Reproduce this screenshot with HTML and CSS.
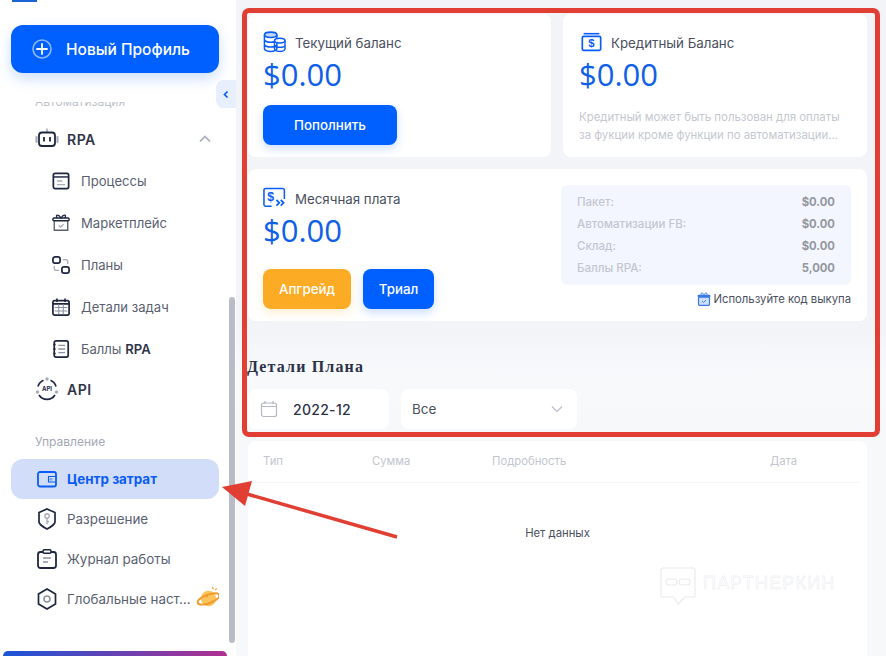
FILE: index.html
```html
<!DOCTYPE html>
<html lang="ru">
<head>
<meta charset="utf-8">
<title>Центр затрат</title>
<link rel="stylesheet" href="styles.css">
</head>
<body>
<div class="app">
  <aside class="sidebar">
    <div class="logo-stub"></div>
    <button class="new-profile">
      <svg class="plus" viewBox="0 0 20 20" width="20" height="20"><circle cx="10" cy="10" r="9" fill="none" stroke="#8db6ff" stroke-width="1.6"/><path d="M10 5v10M5 10h10" stroke="#fff" stroke-width="1.8" stroke-linecap="round"/></svg>
      <span>Новый Профиль</span>
    </button>
    <nav class="nav">
      <div class="group-label clipped">Автоматизация</div>
      <div class="row row-top">
        <svg class="ic24" viewBox="0 0 24 24"><path d="M12 1.500v4" stroke="#a9adb9" stroke-width="1.6"/><path d="M1.500 10v5M22.500 10v5" stroke="#a9adb9" stroke-width="2.2" stroke-linecap="round"/><rect x="4" y="5.500" width="16" height="13.500" rx="3" fill="none" stroke="#1e2640" stroke-width="1.8"/><path d="M9 10v4.500M15 10v4.500" stroke="#1e2640" stroke-width="1.8"/></svg>
        <span class="strong wide">RPA</span>
        <svg class="caret" viewBox="0 0 12 8" width="12" height="8"><path d="M1 6.500l5-5 5 5" fill="none" stroke="#a9adb9" stroke-width="1.7"/></svg>
      </div>
      <div class="sub">
        <svg class="ic18" viewBox="0 0 20 20"><rect x="1.500" y="1.500" width="17" height="17" rx="2" fill="none" stroke="#1e2640" stroke-width="1.9"/><path d="M2 5.500h16" stroke="#1e2640" stroke-width="1.6"/><path d="M5.500 10h6M5.500 14h9" stroke="#a9adb9" stroke-width="1.5"/></svg>
        <span>Процессы</span>
      </div>
      <div class="sub">
        <svg class="ic18" viewBox="0 0 20 20"><path d="M2.500 7v11h15V7" fill="none" stroke="#5a5f70" stroke-width="1.5"/><rect x="1" y="4.500" width="18" height="3" rx="1.200" fill="none" stroke="#1e2640" stroke-width="1.6"/><path d="M6 4.500C3 1 7-.5 10 4.500 13-.5 17 1 14 4.500" fill="none" stroke="#1e2640" stroke-width="1.5"/><path d="M7.500 12.500l2 2 3.500-3" fill="none" stroke="#a9adb9" stroke-width="1.4"/></svg>
        <span>Маркетплейс</span>
      </div>
      <div class="sub">
        <svg class="ic18" viewBox="0 0 20 20"><rect x="1" y="1" width="8" height="7" rx="2.400" fill="none" stroke="#1e2640" stroke-width="1.9"/><rect x="11" y="12" width="8" height="7" rx="2.400" fill="none" stroke="#1e2640" stroke-width="1.9"/><path d="M12 4h3a2.500 2.500 0 0 1 2.500 2.500V9M8 16H5a2.500 2.500 0 0 1-2.500-2.500V11" fill="none" stroke="#a9adb9" stroke-width="1.5"/></svg>
        <span>Планы</span>
      </div>
      <div class="sub">
        <svg class="ic18" viewBox="0 0 20 20"><rect x="1" y="3" width="18" height="16" rx="2" fill="none" stroke="#1e2640" stroke-width="1.9"/><path d="M5.500 .5v4M14.500 .5v4M1 6.500h18" stroke="#1e2640" stroke-width="1.8"/><path d="M3 10.500h14M3 14.500h14M7.500 7v11M12.500 7v11" stroke="#8d92a1" stroke-width="1.2"/></svg>
        <span>Детали задач</span>
      </div>
      <div class="sub">
        <svg class="ic18" viewBox="0 0 20 20"><rect x="2.500" y="1" width="15.500" height="18" rx="2" fill="none" stroke="#1e2640" stroke-width="1.9"/><path d="M1.500 5h2.500M1.500 10h2.500M1.500 15h2.500" stroke="#1e2640" stroke-width="1.500"/><path d="M7 6h7.500M7 10h7.500M7 14h7.500" stroke="#8d92a1" stroke-width="1.500"/></svg>
        <span>Баллы <b class="strong">RPA</b></span>
      </div>
      <div class="row row-api">
        <svg class="ic24" viewBox="0 0 24 24"><path d="M3 9.500A9.500 9.500 0 0 1 8.500 3.300M15.500 3.300A9.500 9.500 0 0 1 21 9.500M4 18a9.500 9.500 0 0 0 16 0" fill="none" stroke="#1e2640" stroke-width="1.700"/><circle cx="12" cy="2" r="1.700" fill="#a9adb9"/><circle cx="2.500" cy="15" r="1.700" fill="#a9adb9"/><circle cx="21.500" cy="15" r="1.700" fill="#a9adb9"/><text x="12" y="14" class="api-text">API</text></svg>
        <span class="strong wide">API</span>
      </div>
      <div class="group-label manage">Управление</div>
      <div class="row active">
        <svg class="ic20" viewBox="0 0 20 20"><rect x="1" y="3" width="18" height="14.500" rx="2" fill="none" stroke="#0a5cf5" stroke-width="1.800"/><path d="M19 7.500h-7.500v5.500H19" fill="none" stroke="#0a5cf5" stroke-width="1.100"/><rect x="12.500" y="9" width="3" height="2.500" fill="#7da4ef"/></svg>
        <span>Центр затрат</span>
      </div>
      <div class="row">
        <svg class="ic20" viewBox="0 0 20 22"><path d="M10 1l8 3.500v9.500c0 2-5 5.500-8 7-3-1.500-8-5-8-7V4.500z" fill="none" stroke="#1e2640" stroke-width="1.700"/><circle cx="10" cy="8" r="2.200" fill="none" stroke="#a9adb9" stroke-width="1.400"/><path d="M10 10.200v6M10 13.500h2" stroke="#a9adb9" stroke-width="1.400"/></svg>
        <span>Разрешение</span>
      </div>
      <div class="row">
        <svg class="ic20" viewBox="0 0 20 20"><rect x="1" y="3" width="18" height="16" rx="2.500" fill="none" stroke="#1e2640" stroke-width="1.800"/><rect x="6" y=".8" width="8" height="3.500" rx="1.200" fill="#fff" stroke="#1e2640" stroke-width="1.500"/><path d="M6 9h8M6 13h5" stroke="#8d92a1" stroke-width="1.500"/></svg>
        <span>Журнал работы</span>
      </div>
      <div class="row">
        <svg class="ic20" viewBox="0 0 20 22"><path d="M10 1l8.500 5v10L10 21l-8.500-5V6z" fill="none" stroke="#1e2640" stroke-width="1.700"/><circle cx="10" cy="11" r="3" fill="none" stroke="#8d92a1" stroke-width="1.600"/></svg>
        <span>Глобальные наст…</span>
        <svg class="planet" viewBox="0 0 26 24" width="25" height="24"><circle cx="13" cy="13.500" r="8" fill="#fcc45d"/><ellipse cx="13" cy="14" rx="12" ry="4.500" transform="rotate(-20 13 14)" fill="none" stroke="#f39a2c" stroke-width="2"/><circle cx="11" cy="11" r="1.500" fill="#f39a2c"/><path d="M17 1.500l1 2.500M21.500 3l-1.500 2" stroke="#f39a2c" stroke-width="1.200"/></svg>
      </div>
    </nav>
    <div class="promo"></div>
    <div class="collapse-tab"><svg viewBox="0 0 8 10" width="6" height="9"><path d="M6 1L2 5l4 4" fill="none" stroke="#0a5cf5" stroke-width="2.200"/></svg></div>
    <div class="scroll-thumb"></div>
  </aside>

  <main class="main">
    <div class="top-cards">
      <section class="card balance balance-main">
        <div class="card-title">
          <svg class="ic-title" viewBox="0 0 24 22"><ellipse cx="8" cy="3.500" rx="6.500" ry="2.800" fill="#0a5cf5" fill-opacity=".25" stroke="#0a5cf5" stroke-width="1.600"/><path d="M1.500 3.500v14.500c0 1.500 3 2.800 6.500 2.800s6.500-1.300 6.500-2.800V3.500M1.500 8.500c0 1.500 3 2.800 6.500 2.800s6.500-1.300 6.500-2.800M1.500 13.500c0 1.500 3 2.800 6.500 2.800s6.500-1.300 6.500-2.800" fill="none" stroke="#0a5cf5" stroke-width="1.600"/><ellipse cx="17.500" cy="9.500" rx="5.500" ry="2.500" fill="#fff" stroke="#0a5cf5" stroke-width="1.500"/><path d="M12 9.500V18c0 1.500 2.500 2.800 5.500 2.800S23 19.500 23 18V9.500M12 14c0 1.400 2.500 2.500 5.500 2.500S23 15.400 23 14" fill="none" stroke="#0a5cf5" stroke-width="1.500"/></svg>
          <span>Текущий баланс</span>
        </div>
        <div class="amount">$0.00</div>
        <button class="btn btn-blue btn-topup">Пополнить</button>
      </section>
      <section class="card balance balance-credit">
        <div class="card-title">
          <svg class="ic-title" viewBox="0 0 24 22"><path d="M3 1.500h18" stroke="#0a5cf5" stroke-width="1.800"/><rect x="1.500" y="4.500" width="21" height="16" rx="1.500" fill="none" stroke="#0a5cf5" stroke-width="1.900"/><text x="12" y="17" class="dollar-text">$</text></svg>
          <span>Кредитный Баланс</span>
        </div>
        <div class="amount">$0.00</div>
        <p class="credit-note">Кредитный может быть пользован для оплаты<br>за фукции кроме функции по автоматизации...</p>
      </section>
    </div>

    <section class="card monthly">
      <div class="monthly-left">
        <div class="card-title">
          <svg class="ic-title" viewBox="0 0 24 22"><path d="M9 19.500H3A1.800 1.800 0 0 1 1 17.800V3A1.800 1.800 0 0 1 3 1h17.500a1.800 1.800 0 0 1 1.800 2v9" fill="none" stroke="#0a5cf5" stroke-width="1.600"/><text x="8" y="14" class="dollar-text">$</text><path d="M14 13l3 3-3 3M18.500 13l3 3-3 3" fill="none" stroke="#0a5cf5" stroke-width="1.800"/></svg>
          <span>Месячная плата</span>
        </div>
        <div class="amount">$0.00</div>
        <div class="btn-row">
          <button class="btn btn-orange">Апгрейд</button>
          <button class="btn btn-blue btn-trial">Триал</button>
        </div>
      </div>
      <div class="monthly-right">
        <dl class="plan-box">
          <div class="plan-row"><dt>Пакет:</dt><dd>$0.00</dd></div>
          <div class="plan-row"><dt>Автоматизации FB:</dt><dd>$0.00</dd></div>
          <div class="plan-row"><dt>Склад:</dt><dd>$0.00</dd></div>
          <div class="plan-row"><dt>Баллы RPA:</dt><dd>5,000</dd></div>
        </dl>
        <div class="redeem">
          <svg viewBox="0 0 14 14" width="14" height="14"><rect x="1.500" y="5" width="11" height="8.300" rx="1" fill="#cfe0fb" stroke="#3b79e8" stroke-width="1.200"/><rect x=".7" y="2.800" width="12.600" height="2.600" rx=".8" fill="#3b79e8"/><path d="M4 2.800C3 .6 6 .4 7 2.800 8 .4 11 .6 10 2.800" fill="none" stroke="#3b79e8" stroke-width="1"/><path d="M5 9l1.500 1.500L9 8" fill="none" stroke="#3b79e8" stroke-width=".9"/></svg>
          <span>Используйте код выкупа</span>
        </div>
      </div>
    </section>

    <h2 class="section-title">Детали Плана</h2>

    <div class="filters">
      <div class="field field-date">
        <svg viewBox="0 0 18 18" width="18" height="18"><rect x="1.500" y="3" width="15" height="13.500" rx="2" fill="none" stroke="#b5b8c2" stroke-width="1.200"/><path d="M1.500 6.500h15M5 1v3M13 1v3" stroke="#b5b8c2" stroke-width="1.200"/></svg>
        <span>2022-12</span>
      </div>
      <div class="field field-select">
        <span>Все</span>
        <svg viewBox="0 0 12 8" width="12" height="8"><path d="M1 1.500l5 5 5-5" fill="none" stroke="#c3c6d0" stroke-width="1.500"/></svg>
      </div>
    </div>

    <section class="table-card">
      <div class="table-head">
        <span class="col-type">Тип</span>
        <span class="col-sum">Сумма</span>
        <span class="col-detail">Подробность</span>
        <span class="col-date">Дата</span>
      </div>
      <div class="table-empty">Нет данных</div>
    </section>
  </main>
</div>

<div class="watermark">
  <svg viewBox="0 0 36 38" width="36" height="38"><path d="M3 1h30a2 2 0 0 1 2 2v25a2 2 0 0 1-2 2H25l-7 7-4-7H3a2 2 0 0 1-2-2V3a2 2 0 0 1 2-2z" fill="#fff" stroke="#e9eaee" stroke-width="1.100"/><rect x="6" y="12" width="11" height="6" rx="3" fill="none" stroke="#e9eaee" stroke-width="1.100"/><rect x="19" y="12" width="11" height="6" rx="3" fill="none" stroke="#e9eaee" stroke-width="1.100"/></svg>
  <span>ПАРТНЕРКИН</span>
</div>
<div class="red-frame"></div>
<svg class="red-arrow" viewBox="0 0 886 656" width="886" height="656"><path d="M397 537L240 492" stroke="#e13f33" stroke-width="3.500"/><path d="M222 487L252 481L245 506z" fill="#e13f33"/></svg>
</body>
</html>
```

FILE: styles.css
```css
* { box-sizing: border-box; }
html, body { margin: 0; height: 656px; overflow: hidden; }
body {
  font-family: Inter, "Liberation Sans", sans-serif;
  background: #f3f4f8;
  color: #2a3148;
  position: relative;
}
button { font-family: inherit; border: 0; cursor: pointer; }

.app { display: flex; height: 656px; }

/* sidebar */
.sidebar {
  position: relative;
  flex: 0 0 236px;
  width: 236px;
  height: 656px;
  background: #fff;
  overflow: hidden;
}
.logo-stub { width: 25px; height: 2px; margin-left: 12px; background: #1e62d8; }
.new-profile {
  display: flex;
  align-items: center;
  gap: 14px;
  width: 208px;
  height: 48px;
  margin: 23px 0 0 11px;
  padding: 0 21px;
  background: #0060ff;
  border-radius: 12px;
  box-shadow: 0 6px 14px rgba(0, 96, 255, .2);
  color: #fff;
  font-size: 15.500px;
  font-weight: 500;
  white-space: nowrap;
}
.plus { flex: none; }
.nav {
  height: 522px;
  margin-top: 29px;
  margin-left: 11px;
  width: 208px;
  overflow: hidden;
  font-size: 13.400px;
  color: #5a5f70;
}
.group-label { font-size: 12px; color: #a4a8b4; padding-left: 24px; height: 20px; line-height: 20px; }
.clipped { margin-top: -10px; opacity: .7; }
.row {
  display: flex;
  align-items: center;
  height: 40px;
  padding-left: 24px;
  gap: 10px;
  border-radius: 12px;
  white-space: nowrap;
}
.row-top { margin-top: 7px; margin-bottom: 1px; gap: 8px; }
.row-api { height: 38px; gap: 8px; }
.manage { margin-top: 24px; margin-bottom: 7px; }
.sub {
  display: flex;
  align-items: center;
  gap: 11px;
  height: 42px;
  padding-left: 41px;
  font-size: 13.100px;
  white-space: nowrap;
}
.strong { font-weight: 600; color: #2f3549; }
.wide { font-size: 14px; letter-spacing: .5px; }
.caret { margin-left: auto; margin-right: 8px; }
.ic24 { width: 24px; height: 24px; flex: none; }
.ic18 { width: 18px; height: 18px; flex: none; }
.ic20 { width: 20px; height: 22px; flex: none; margin-left: 2px; }
.api-text { font: 700 6px Inter, sans-serif; fill: #1e2640; text-anchor: middle; }
.active { background: #d2def9; color: #0a5cf5; font-weight: 700; }
.planet { margin-left: -5px; margin-top: -4px; flex: none; }
.promo {
  position: absolute;
  left: 3px;
  top: 651px;
  width: 224px;
  height: 5px;
  border-radius: 10px 10px 0 0;
  background: linear-gradient(90deg, #1a55d8, #b0308f);
}
.collapse-tab {
  position: absolute;
  left: 216px;
  top: 80px;
  width: 20px;
  height: 28px;
  display: flex;
  align-items: center;
  justify-content: center;
  background: #e7eefc;
  border-radius: 8px 0 0 8px;
}
.scroll-thumb {
  position: absolute;
  left: 229px;
  top: 297px;
  width: 6px;
  height: 346px;
  background: #b9bcc6;
  border-radius: 3px;
}

/* main */
.main {
  flex: 1;
  min-width: 0;
  padding: 14px 19px 0 12px;
  background: linear-gradient(180deg, #f3f4f8 0, #f3f4f8 50%, #f8f9fb 57%, #f7f8fa 65%);
}
.top-cards { display: flex; gap: 12px; }
.card { background: #fff; border-radius: 8px; }
.balance { height: 143px; padding: 17px 15px; }
.balance-main { flex: 0 0 303px; }
.balance-credit { flex: 1; padding-left: 16px; }
.card-title { display: flex; align-items: center; gap: 9px; height: 24px; font-size: 13.300px; color: #4a4f60; white-space: nowrap; }
.ic-title { width: 23px; height: 22px; flex: none; margin-bottom: 3px; }
.balance-credit .ic-title { margin-left: 2px; width: 21px; }
.dollar-text { font: 700 13px "Liberation Sans", sans-serif; fill: #0a5cf5; text-anchor: middle; }
.amount {
  font-family: "Open Sans", sans-serif;
  font-size: 31px;
  font-weight: 500;
  line-height: 36px;
  color: #0f5fe8;
  margin-top: 1px;
}
.btn {
  height: 40px;
  border-radius: 8px;
  color: #fff;
  font-size: 13.300px;
  font-weight: 500;
}
.btn-blue { background: #0060ff; box-shadow: 0 4px 10px rgba(0, 96, 255, .2); }
.btn-orange { background: #fcab25; box-shadow: 0 4px 10px rgba(252, 171, 37, .2); width: 88px; }
.btn-topup { width: 134px; margin-top: 13px; display: block; }
.btn-trial { width: 71px; }
.credit-note { margin: 16px 0 0; font-size: 11.400px; line-height: 18px; color: #c5c8d0; white-space: nowrap; }

.monthly { display: flex; justify-content: space-between; height: 152px; margin-top: 12px; padding: 18px 16px 0 15px; }
.monthly-left { width: 200px; }
.btn-row { display: flex; gap: 12px; margin-top: 21px; }
.monthly-right { width: 290px; margin-top: -2px; }
.plan-box { margin: 0; height: 100px; padding: 6px 16px; background: #f3f6fe; border-radius: 6px; }
.plan-row { display: flex; justify-content: space-between; align-items: center; height: 22px; }
.plan-row dt { font-size: 11.500px; font-weight: 500; color: #c3c6d0; }
.plan-row dd { margin: 0; font-size: 11.300px; font-weight: 700; color: #94979f; }
.redeem { display: flex; justify-content: flex-end; align-items: center; gap: 2px; margin-top: 7px; font-size: 11.300px; color: #4a4f60; white-space: nowrap; }

.section-title {
  font-family: "Liberation Serif", serif;
  font-size: 16px;
  font-weight: 700;
  letter-spacing: 1.150px;
  line-height: 20px;
  margin: 36px 0 0 -1px;
  color: #2a3148;
}
.filters { display: flex; gap: 12px; margin-top: 12px; }
.field { display: flex; align-items: center; height: 40px; background: #fff; border-radius: 8px; font-size: 14px; }
.field-date { width: 141px; padding-left: 12px; gap: 15px; letter-spacing: .3px; font-weight: 500; }
.field-select { width: 176px; padding: 0 14px 0 11px; justify-content: space-between; color: #4a4f60; font-size: 13.500px; }

.table-card { height: 215px; margin-top: 12px; background: #fff; border-radius: 8px 8px 0 0; font-size: 11.300px; }
.table-head {
  display: grid;
  grid-template-columns: 109px 120px 278px auto;
  align-items: center;
  height: 42px;
  margin-right: 7px;
  padding: 0 0 2px 15px;
  color: #c3c6d0;
  border-bottom: 1px solid #f3f5fa;
}
.table-empty { margin-top: 43px; text-align: center; color: #4a4f60; }

/* overlays */
.watermark {
  position: absolute;
  left: 660px;
  top: 567px;
  display: flex;
  align-items: center;
  gap: 7px;
  font: 400 18px "Liberation Sans", sans-serif;
  letter-spacing: 1.200px;
  color: #fff;
  -webkit-text-stroke: .5px #e9eaee;
}
.watermark span { margin-top: -6px; }
.red-frame {
  position: absolute;
  left: 242px;
  top: 8px;
  width: 638px;
  height: 429px;
  border: 5px solid #e13f33;
  border-radius: 7px;
  pointer-events: none;
}
.red-arrow { position: absolute; left: 0; top: 0; pointer-events: none; }
```
